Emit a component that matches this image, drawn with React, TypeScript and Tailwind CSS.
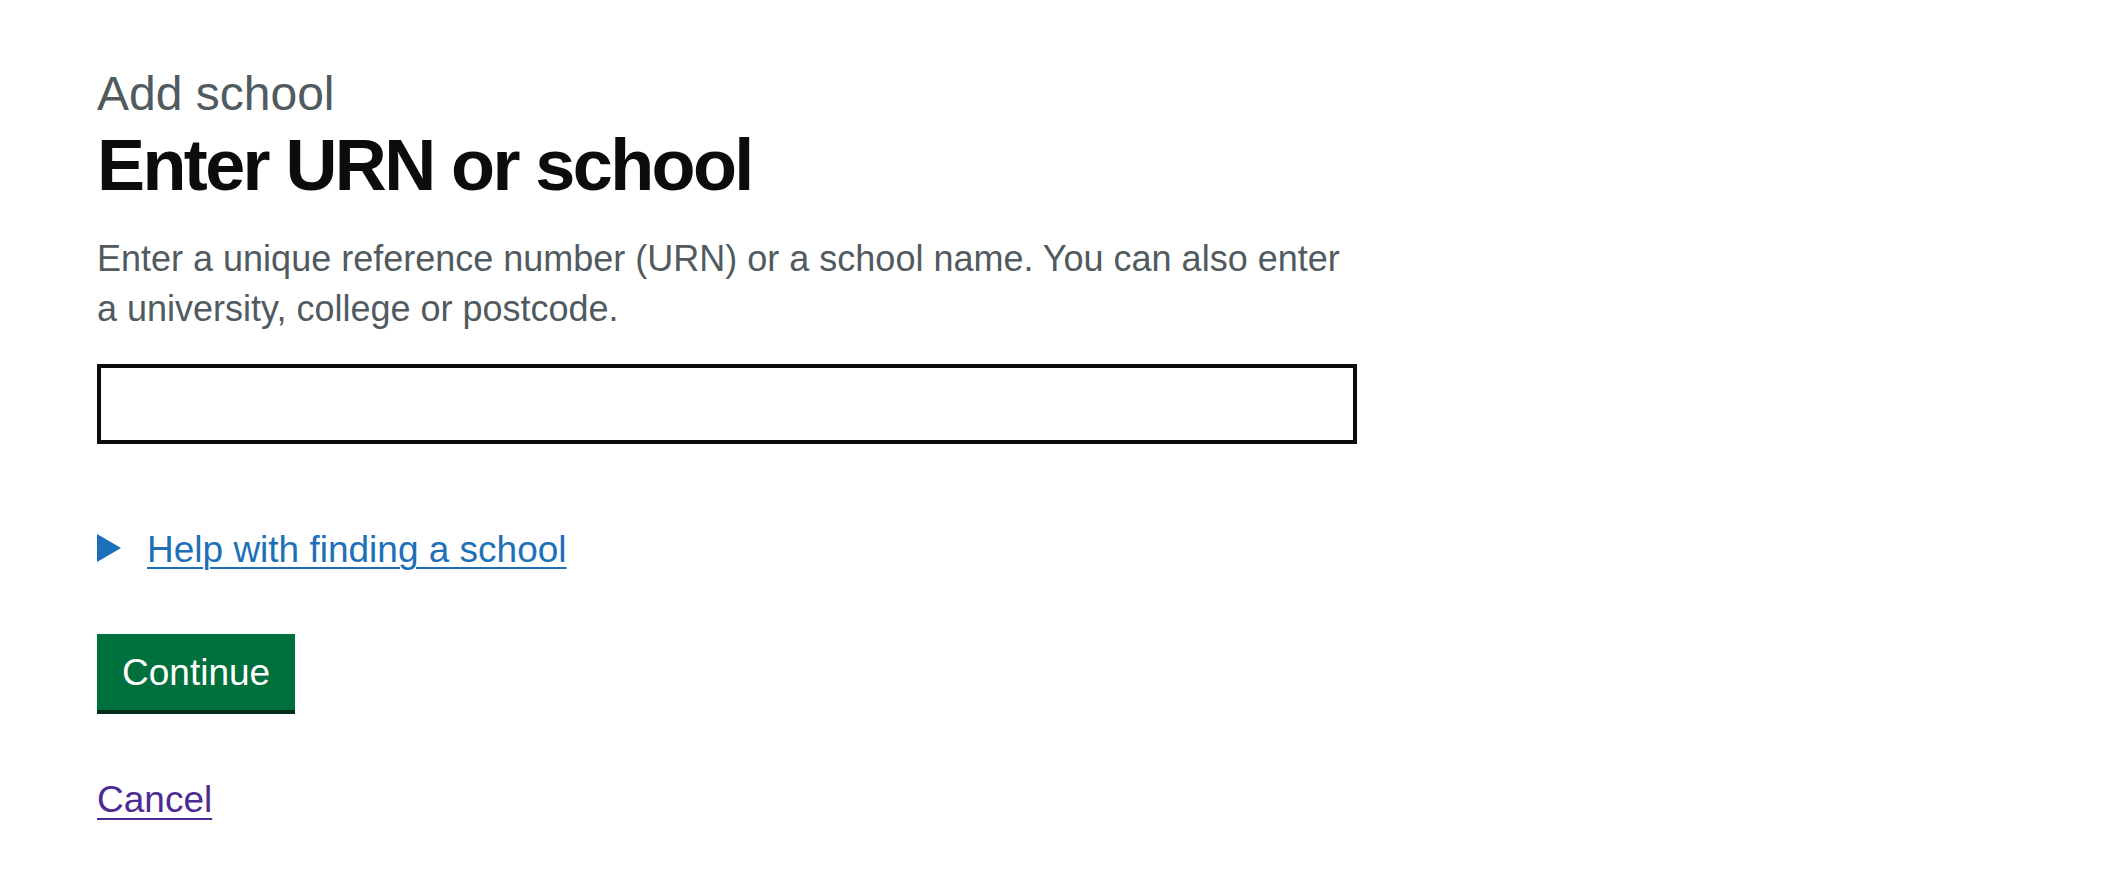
import React from "react";

export default function App() {
  return (
    <div className="min-h-screen bg-white font-['Liberation_Sans',Arial,sans-serif]">
      <div className="mx-auto max-w-[1920px] pt-[64px]">
        <div className="w-[1260px]">
          <span className="block text-[48px] leading-[60px] text-[#505a5f]">Add school</span>
          <h1 className="mt-[1px] text-[72px] font-bold leading-[80px] tracking-[-2.6px] text-[#0b0c0c]">
            Enter URN or school
          </h1>
          <div className="mt-[29px] text-[36px] leading-[50px] text-[#505a5f]">
            Enter a unique reference number (URN) or a school name. You can also enter a university, college or postcode.
          </div>
          <input
            type="text"
            aria-label="URN or school"
            className="mt-[30px] block h-[80px] w-[1260px] border-[4px] border-[#0b0c0c] bg-white px-[10px] text-[37px] outline-none"
          />
          <div className="mt-[81px] flex h-[50px] items-center">
            <svg width="24" height="28" viewBox="0 0 24 28" className="mr-[26px] mt-[-4px] shrink-0">
              <polygon points="0,0 24,14 0,28" fill="#1d70b8" />
            </svg>
            <a
              href="#"
              className="text-[37px] leading-[50px] text-[#1d70b8] underline decoration-[2px] underline-offset-[5px]"
            >
              Help with finding a school
            </a>
          </div>
          <button
            type="button"
            className="mt-[59px] block border-[4px] border-transparent bg-[#00703c] px-[21px] pb-[14px] pt-[16px] text-[37px] leading-[38px] text-white shadow-[0_4px_0_#002d18]"
          >
            Continue
          </button>
          <div className="mt-[65px]">
            <a
              href="#"
              className="text-[37px] leading-[50px] text-[#4c2c92] underline decoration-[2px] underline-offset-[6px]"
            >
              Cancel
            </a>
          </div>
        </div>
      </div>
    </div>
  );
}
